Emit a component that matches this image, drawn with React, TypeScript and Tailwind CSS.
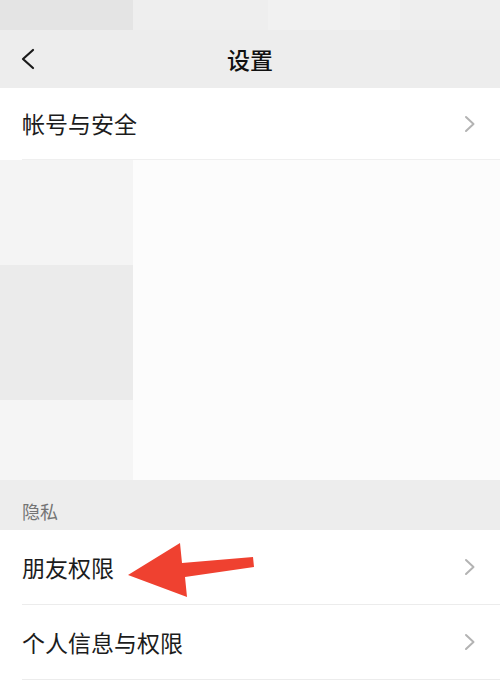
const font = { fontFamily: '"Noto Sans CJK SC", "Noto Sans", sans-serif' };

function Chevron() {
  return (
    <svg width="12" height="18" viewBox="0 0 12 18" fill="none">
      <polyline points="2,2 9.5,9 2,16" stroke="#b3b3b3" strokeWidth="2" strokeLinecap="round" strokeLinejoin="round" />
    </svg>
  );
}

function Row({ label }: { label: string }) {
  return (
    <div className="pl-[22px]">
      <div className="flex h-[75px] items-center justify-between border-b border-[#ececec] pr-[24px]">
        <span className="text-[23px] text-[#1c1c1c]">{label}</span>
        <Chevron />
      </div>
    </div>
  );
}

function ArrowMark() {
  return (
    <svg className="pointer-events-none absolute left-0 top-0" width="500" height="683" viewBox="0 0 500 683">
      <polygon
        points="128,575 180,543 182,563 253,557 254,567 185,577 187,597"
        fill="#ef4130"
      />
    </svg>
  );
}

export default function App() {
  return (
    <div className="relative flex h-[683px] w-[500px] flex-col overflow-hidden bg-[#ededed]" style={font}>
      {/* blurred status bar */}
      <div className="flex h-[30px] shrink-0">
        <div className="w-[133px] bg-[#e4e4e4]" />
        <div className="w-[135px] bg-[#eeeeee]" />
        <div className="w-[132px] bg-[#f1f1f1]" />
        <div className="flex-1 bg-[#eeeeee]" />
      </div>

      {/* header */}
      <div className="relative flex h-[58px] shrink-0 items-center justify-center">
        <svg className="absolute left-[20px] top-[18px]" width="16" height="22" viewBox="0 0 16 22" fill="none">
          <polyline points="13,2 3,11 13,20" stroke="#1a1a1a" strokeWidth="2.2" strokeLinecap="round" strokeLinejoin="round" />
        </svg>
        <span className="text-[23px] font-medium text-[#111]">设置</span>
      </div>

      <div className="shrink-0 bg-white pl-[22px]">
        <div className="flex h-[72px] items-center justify-between border-b border-[#efefef] pr-[24px]">
          <span className="text-[23px] text-[#1c1c1c]">帐号与安全</span>
          <Chevron />
        </div>
      </div>

      {/* blurred block */}
      <div className="flex h-[320px] shrink-0">
        <div className="flex w-[133px] flex-col">
          <div className="h-[105px] bg-[#f4f4f4]" />
          <div className="h-[135px] bg-[#ebebeb]" />
          <div className="flex-1 bg-[#f5f5f5]" />
        </div>
        <div className="flex-1 bg-[#fcfcfc]" />
      </div>

      {/* section */}
      <div className="flex h-[50px] shrink-0 items-end pb-[5px] pl-[22px]">
        <span className="text-[18px] text-[#747474]">隐私</span>
      </div>

      <div className="flex-1 bg-white">
        <Row label="朋友权限" />
        <Row label="个人信息与权限" />
      </div>

      <ArrowMark />
    </div>
  );
}
